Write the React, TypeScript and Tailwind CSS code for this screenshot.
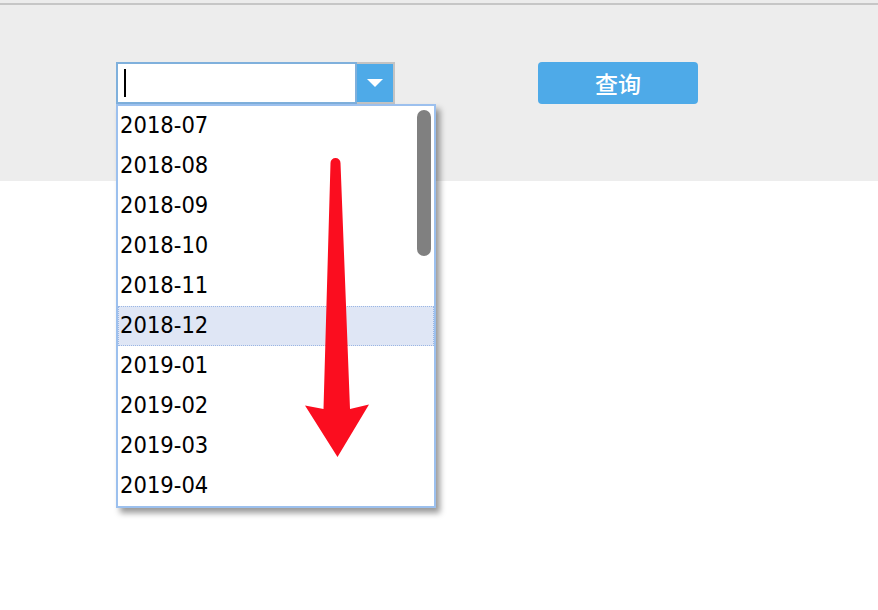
const months = [
  "2018-07",
  "2018-08",
  "2018-09",
  "2018-10",
  "2018-11",
  "2018-12",
  "2019-01",
  "2019-02",
  "2019-03",
  "2019-04",
];

const App = () => {
  return (
    <div className="w-[878px] h-[610px] bg-white font-['DejaVu_Sans_Condensed','DejaVu_Sans',sans-serif] font-stretch-condensed relative overflow-hidden">
      <div className="h-[3px] bg-[#ececec]"></div>
      <div className="h-[2px] bg-[#c6c6c6]"></div>
      <div className="h-[176px] bg-[#ededed] flex items-start pl-[116px] pt-[57px]">
        <div className="relative flex w-[279px] h-[42px]">
          <div className="flex-1 bg-white border-2 border-[#7fb0dc] flex items-center pl-[6px]">
            <div className="w-[2px] h-[28px] bg-black"></div>
          </div>
          <div className="w-[38px] h-full bg-[#4eaae8] border-2 border-l-0 border-[#c3c3c3] flex items-center justify-center">
            <svg width="18" height="10" viewBox="0 0 18 10">
              <polygon points="1,1 17,1 9,9" fill="#ffffff" />
            </svg>
          </div>

          <div className="absolute left-0 top-[42px] w-[320px] bg-white border-2 border-[#9cc0ee] shadow-[4px_5px_6px_rgba(0,0,0,0.4)] z-10">
            {months.map((m) => (
              <div
                key={m}
                className={
                  m === "2018-12"
                    ? "h-[40px] flex items-center pl-[1px] text-[23.5px] text-black bg-[#dfe6f5] border border-dotted border-[#9ab6e4]"
                    : "h-[40px] flex items-center pl-[2px] text-[23.5px] text-black"
                }
              >
                {m}
              </div>
            ))}
            <div className="absolute right-[3px] top-[4px] w-[14px] h-[146px] rounded-full bg-[#808080]"></div>
          </div>
        </div>

        <button className="ml-[143px] w-[160px] h-[42px] rounded-[4px] bg-[#4eaae8] text-white text-[23px] font-medium font-['Noto_Sans_CJK_SC',sans-serif] flex items-center justify-center">
          查询
        </button>
      </div>

      <svg
        className="absolute left-0 top-0 z-20 pointer-events-none"
        width="878"
        height="610"
        viewBox="0 0 878 610"
      >
        <path
          d="M330.5,163 A5,5 0 0 1 340.5,163 L350,409 L369,404.5 L337.5,457 L305,405.5 L323.5,409 Z"
          fill="#fb0d1f"
        />
      </svg>
    </div>
  );
};

export default App;
